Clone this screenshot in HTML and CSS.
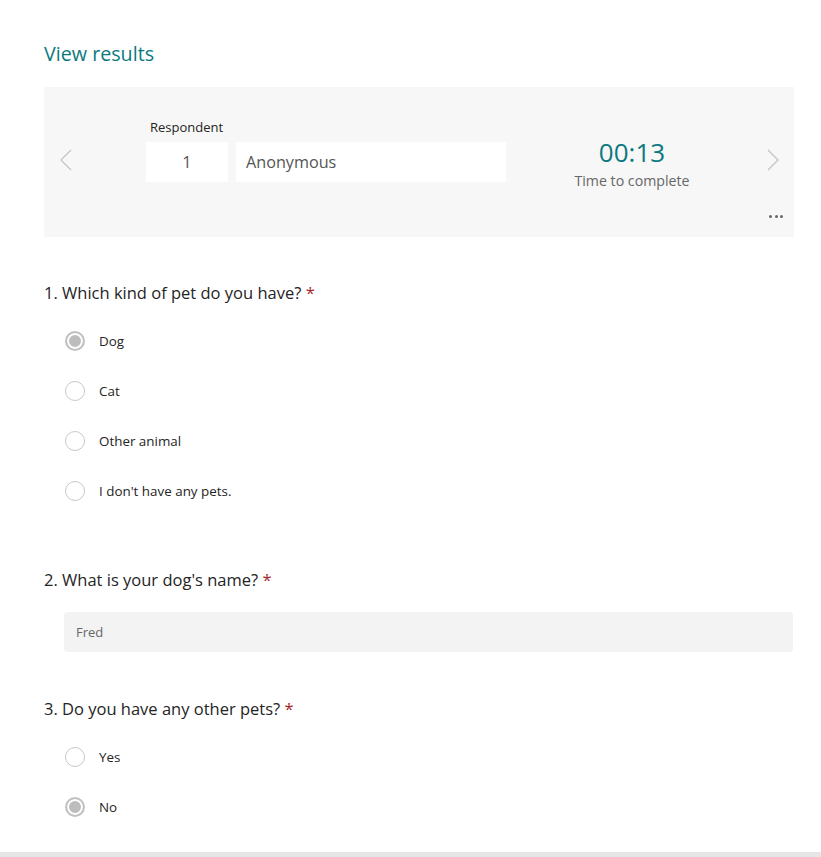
FILE: index.html
```html
<!DOCTYPE html>
<html>
<head>
<meta charset="utf-8">
<link rel="stylesheet" href="styles.css">
</head>
<body>
<div class="page">
  <h1 class="title">View results</h1>
  <div class="panel">
    <svg class="chev chev-left" width="12" height="22" viewBox="0 0 12 22"><path d="M11 1 L1 11 L11 21" fill="none" stroke="#c4c4c4" stroke-width="1.3"/></svg>
    <div class="resp">
      <div class="resp-label">Respondent</div>
      <div class="resp-row">
        <div class="box box-num">1</div>
        <div class="box box-name">Anonymous</div>
      </div>
    </div>
    <div class="time">
      <div class="time-val">00:13</div>
      <div class="time-label">Time to complete</div>
    </div>
    <svg class="chev chev-right" width="12" height="22" viewBox="0 0 12 22"><path d="M1 1 L11 11 L1 21" fill="none" stroke="#c4c4c4" stroke-width="1.3"/></svg>
    <div class="dots"><span></span><span></span><span></span></div>
  </div>

  <div class="q q1">1. Which kind of pet do you have? <span class="req">*</span></div>
  <div class="opts">
    <div class="opt"><span class="radio sel"></span><span class="opt-text">Dog</span></div>
    <div class="opt"><span class="radio"></span><span class="opt-text">Cat</span></div>
    <div class="opt"><span class="radio"></span><span class="opt-text">Other animal</span></div>
    <div class="opt"><span class="radio"></span><span class="opt-text">I don't have any pets.</span></div>
  </div>

  <div class="q q2">2. What is your dog's name? <span class="req">*</span></div>
  <div class="input">Fred</div>

  <div class="q q3">3. Do you have any other pets? <span class="req">*</span></div>
  <div class="opts">
    <div class="opt"><span class="radio"></span><span class="opt-text">Yes</span></div>
    <div class="opt"><span class="radio sel"></span><span class="opt-text">No</span></div>
  </div>
</div>
<div class="bottom-bar"></div>
</body>
</html>
```

FILE: styles.css
```css
html, body {
  margin: 0;
  padding: 0;
  background: #fff;
  font-family: "Open Sans", "Noto Sans", sans-serif;
  color: #252424;
}
.page {
  padding: 40px 27px 0 44px;
}
.title {
  margin: 0;
  font-size: 19.7px;
  line-height: 27px;
  font-weight: 400;
  color: #0b7a80;
}
.panel {
  position: relative;
  margin-top: 20px;
  height: 150px;
  box-sizing: border-box;
  background: #f7f7f7;
  display: flex;
  align-items: flex-start;
  padding: 31px 15px 0 16px;
}
.chev { display: block; flex: none; margin-top: 31px; }
.chev-right { margin-left: auto; }
.resp { margin-left: 74px; }
.resp-label {
  font-size: 13px;
  line-height: 18px;
  color: #252424;
  padding-left: 4px;
}
.resp-row { display: flex; gap: 8px; margin-top: 6px; }
.box {
  background: #fff;
  height: 40px;
  line-height: 40px;
  font-size: 16.2px;
  color: #555;
}
.box-num { width: 82px; text-align: center; }
.box-name { width: 260px; padding-left: 10px; }
.time {
  width: 200px;
  margin-left: 26px;
  margin-top: 18px;
  text-align: center;
}
.time-val {
  font-size: 26px;
  line-height: 32px;
  color: #0b7a80;
}
.time-label {
  margin-top: 3px;
  font-size: 14.2px;
  line-height: 20px;
  color: #666;
}
.dots {
  position: absolute;
  right: 11px;
  bottom: 19px;
  display: flex;
  gap: 2.5px;
}
.dots span {
  width: 3px;
  height: 3px;
  border-radius: 50%;
  background: #666;
}
.q {
  font-size: 16.5px;
  line-height: 22px;
  color: #252424;
}
.req { color: #a4262c; }
.q1 { margin-top: 45px; }
.q2 { margin-top: 53px; }
.q3 { margin-top: 46px; }
.opts { margin-top: 12px; }
.opt {
  height: 50px;
  display: flex;
  align-items: center;
  padding-left: 21px;
}
.radio {
  width: 20px;
  height: 20px;
  box-sizing: border-box;
  border: 1px solid #c8c8c8;
  border-radius: 50%;
  background: #fff;
  margin-right: 14px;
  flex: none;
}
.radio.sel {
  border: 2px solid #c2c2c2;
  background: #bdbdbd;
  box-shadow: inset 0 0 0 2px #fff;
}
.opt-text {
  font-size: 13.4px;
  color: #252424;
}
.input {
  margin: 21px 1px 0 20px;
  height: 40px;
  line-height: 40px;
  background: #f3f3f3;
  border-radius: 4px;
  padding-left: 12px;
  font-size: 13px;
  color: #666;
}
.bottom-bar {
  margin-top: 20px;
  height: 12px;
  background: #e6e6e6;
}
```
